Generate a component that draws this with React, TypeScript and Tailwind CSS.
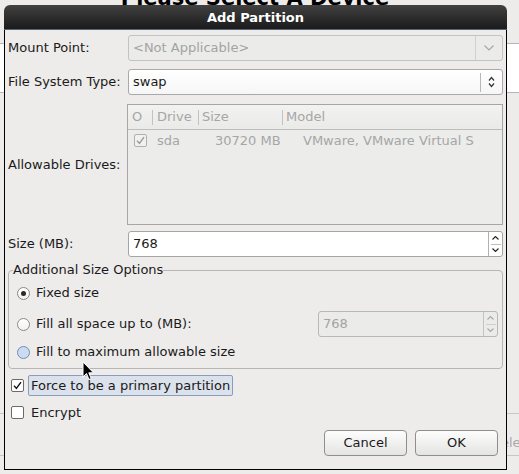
import React from "react";

function ChevDown({ className = "" }: { className?: string }) {
  return (
    <svg width="10" height="6" viewBox="0 0 10 6" className={className}>
      <polyline points="0.5,0.5 5,5 9.5,0.5" fill="none" stroke="currentColor" strokeWidth="1.1" />
    </svg>
  );
}

function UpDown() {
  return (
    <svg width="7" height="12" viewBox="0 0 7 12">
      <polyline points="1,4.5 3.5,1.5 6,4.5" fill="none" stroke="currentColor" strokeWidth="1.2" />
      <polyline points="1,7.5 3.5,10.5 6,7.5" fill="none" stroke="currentColor" strokeWidth="1.2" />
    </svg>
  );
}

function SpinButtons({ disabled = false }: { disabled?: boolean }) {
  const color = disabled ? "text-[#a8a8a8]" : "text-[#222]";
  return (
    <div className={`flex w-[14px] flex-col items-center border-l ${disabled ? "border-[#c4c4c4]" : "border-[#b0b0b0]"} ${color}`}>
      <div className="flex flex-1 items-center justify-center">
        <svg width="7" height="4" viewBox="0 0 7 4">
          <polyline points="0.5,3.5 3.5,0.5 6.5,3.5" fill="none" stroke="currentColor" strokeWidth="1.1" />
        </svg>
      </div>
      <div className={`h-px w-[10px] ${disabled ? "bg-[#cfcfcf]" : "bg-[#bdbdbd]"}`} />
      <div className="flex flex-1 items-center justify-center">
        <svg width="7" height="4" viewBox="0 0 7 4">
          <polyline points="0.5,0.5 3.5,3.5 6.5,0.5" fill="none" stroke="currentColor" strokeWidth="1.1" />
        </svg>
      </div>
    </div>
  );
}

function CheckBox({ checked, disabled = false }: { checked: boolean; disabled?: boolean }) {
  return (
    <div
      className={`flex h-[13px] w-[13px] shrink-0 items-center justify-center rounded-[2px] border ${
        disabled ? "border-[#b0b0b0] bg-[#f1f1f1] text-[#9a9a9a]" : "border-[#6a6a6a] bg-white text-[#111]"
      }`}
    >
      {checked && (
        <svg width="9" height="9" viewBox="0 0 9 9">
          <polyline points="1,4.6 3.4,7.4 8,1.2" fill="none" stroke="currentColor" strokeWidth="1.4" />
        </svg>
      )}
    </div>
  );
}

function Radio({ selected = false, hover = false }: { selected?: boolean; hover?: boolean }) {
  return (
    <div
      className={`flex h-[13px] w-[13px] shrink-0 items-center justify-center rounded-full border ${
        hover ? "border-[#6d8dbd] bg-[#cbdcf1]" : "border-[#8a8a8a] bg-linear-to-b from-white to-[#f1f1f1]"
      }`}
    >
      {selected && <div className="h-[5px] w-[5px] rounded-full bg-[#2a2a2a]" />}
    </div>
  );
}

export default function App() {
  return (
    <div className="relative h-[474px] w-[519px] overflow-hidden bg-[#edeceb] font-['DejaVu_Sans','Liberation_Sans',sans-serif] text-[13px] text-[#1a1a1a]">
      {/* background page */}
      <div className="-mt-[12px] whitespace-nowrap pr-[9px] text-center text-[21px] font-bold leading-[21px] text-black">
        Please Select A Device
      </div>
      <div className="mt-[34px] h-[50px] border-y border-[#b5b5b5] bg-white" />
      <div className="mt-[320px] flex h-[43px] items-center border-y border-[#c6c6c6] pl-[491px]">
        <span className="mt-[16px] whitespace-nowrap text-[#a8a8a8]">Delete</span>
      </div>

      {/* dialog */}
      <div className="absolute left-[4px] top-[5px] flex h-[465px] w-[503px] flex-col">
        <div className="flex h-[25px] items-center justify-center rounded-t-[6px] border-b border-[#56647a] bg-linear-to-b from-[#414141] to-[#1b1b1b] pt-[1px] font-bold text-white">
          Add Partition
        </div>
        <div className="flex flex-1 flex-col border-x border-b border-black bg-[#edeceb] px-[3px]">
          {/* Mount point */}
          <div className="mt-[5px] flex h-[26px] items-center">
            <div className="w-[120px]">Mount Point:</div>
            <div className="flex h-full w-[375px] items-center rounded-[3px] border border-[#c3c3c3] bg-[#ebebea]">
              <span className="flex-1 pl-[4px] text-[#a3a3a3]">&lt;Not Applicable&gt;</span>
              <div className="flex h-full w-[27px] items-center justify-center border-l border-[#d0d0d0] text-[#a6a6a6]">
                <ChevDown />
              </div>
            </div>
          </div>

          {/* File system type */}
          <div className="mt-[8px] flex h-[26px] items-center">
            <div className="w-[120px]">File System Type:</div>
            <div className="flex h-full w-[375px] items-center rounded-[3px] border border-[#a9a9a9] bg-linear-to-b from-white to-[#f6f6f6]">
              <span className="flex-1 pl-[4px]">swap</span>
              <div className="flex h-full w-[22px] items-center">
                <div className="h-[19px] border-l border-[#b8b8b8]" />
                <div className="flex flex-1 items-center justify-center text-[#333]">
                  <UpDown />
                </div>
              </div>
            </div>
          </div>

          {/* Allowable drives */}
          <div className="mt-[9px] flex h-[121px] items-center">
            <div className="w-[120px]">Allowable Drives:</div>
            <div className="-ml-[1px] flex h-full w-[376px] flex-col border border-[#a6a6a6] bg-[#ececeb] text-[#a6a6a6]">
              <div className="flex h-[25px] shrink-0 items-center border-b border-[#bdbdbd] bg-linear-to-b from-[#f2f2f1] to-[#eaeae9]">
                <div className="w-[24px] pl-[4px]">O</div>
                <div className="h-[15px] w-px bg-[#c2c2c2]" />
                <div className="w-[45px] pl-[4px]">Drive</div>
                <div className="h-[15px] w-px bg-[#c2c2c2]" />
                <div className="w-[83px] pl-[3px]">Size</div>
                <div className="h-[15px] w-px bg-[#c2c2c2]" />
                <div className="flex-1 pl-[3px]">Model</div>
              </div>
              <div className="flex h-[21px] items-center whitespace-nowrap">
                <div className="w-[24px] pl-[6px]">
                  <CheckBox checked disabled />
                </div>
                <div className="w-px" />
                <div className="w-[45px] pl-[4px]">sda</div>
                <div className="w-px" />
                <div className="w-[83px] pl-[16px]">30720 MB</div>
                <div className="w-px" />
                <div className="flex-1 pl-[20px]">VMware, VMware Virtual S</div>
              </div>
            </div>
          </div>

          {/* Size */}
          <div className="mt-[6px] flex h-[26px] items-center">
            <div className="w-[120px]">Size (MB):</div>
            <div className="flex h-full w-[375px] rounded-[3px] border border-[#a5a5a5] bg-white">
              <span className="flex flex-1 items-center pl-[4px]">768</span>
              <SpinButtons />
            </div>
          </div>

          {/* Additional size options */}
          <fieldset className="mt-[5px] rounded-[4px] border border-[#b6b6b6] pb-[6px] pl-[4px] pr-[4px]">
            <legend className="p-0 leading-[16px]">Additional Size Options</legend>
            <div className="mt-[5px] flex h-[20px] items-center gap-[6px] pl-[4px]">
              <Radio selected />
              <span>Fixed size</span>
            </div>
            <div className="mt-[8px] flex h-[26px] items-center gap-[6px] pl-[4px]">
              <Radio />
              <span>Fill all space up to (MB):</span>
              <div className="ml-auto flex h-full w-[180px] rounded-[3px] border border-[#b8b8b8] bg-[#ebebea]">
                <span className="flex flex-1 items-center pl-[4px] text-[#a3a3a3]">768</span>
                <SpinButtons disabled />
              </div>
            </div>
            <div className="mt-[5px] flex h-[20px] items-center gap-[6px] pl-[4px]">
              <Radio hover />
              <span>Fill to maximum allowable size</span>
            </div>
          </fieldset>

          {/* Primary */}
          <div className="mt-[6px] flex h-[21px] items-center pl-[3px]">
            <CheckBox checked />
            <div className="ml-[4px] flex h-full items-center rounded-[2px] border border-[#8a9cbb] bg-[#dce2eb] px-[2px]">
              Force to be a primary partition
            </div>
          </div>

          {/* Encrypt */}
          <div className="mt-[6px] flex h-[21px] items-center pl-[3px]">
            <CheckBox checked={false} />
            <div className="ml-[4px] flex h-full items-center border border-transparent px-[2px]">Encrypt</div>
          </div>

          {/* Buttons */}
          <div className="mt-[7px] flex h-[26px] justify-end gap-[8px] pr-[5px]">
            <button className="flex h-full w-[83px] items-center justify-center rounded-[4px] border border-[#8e8e8e] bg-linear-to-b from-[#fdfdfd] to-[#e4e4e3]">
              Cancel
            </button>
            <button className="flex h-full w-[83px] items-center justify-center rounded-[4px] border border-[#8e8e8e] bg-linear-to-b from-[#fdfdfd] to-[#e4e4e3]">
              OK
            </button>
          </div>
        </div>
      </div>

      {/* mouse cursor */}
      <svg className="absolute left-[82px] top-[361px]" width="13" height="21" viewBox="0 0 13 21">
        <path d="M1,1 L1,16 L4.5,12.5 L7,18.5 L9.2,17.6 L6.8,11.8 L11.5,11.8 Z" fill="#000" stroke="#fff" strokeWidth="1" strokeLinejoin="round" />
      </svg>
    </div>
  );
}
